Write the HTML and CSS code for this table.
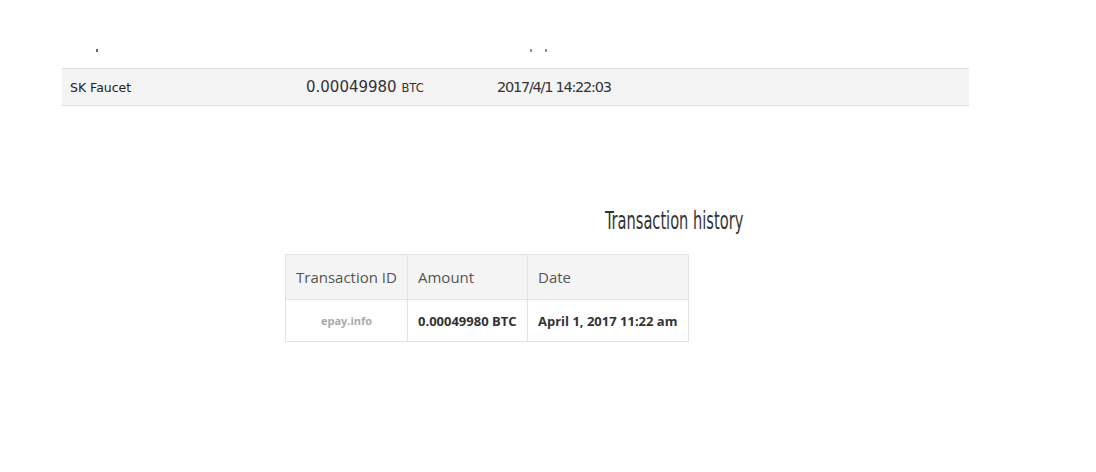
FILE: index.html
```html
<!DOCTYPE html>
<html lang="en">
<head>
    <meta charset="UTF-8">
    <title>Transaction history</title>
    <link rel="stylesheet" href="styles.css">
</head>
<body>
    <!-- previous row is scrolled out of view, only a few descender tips remain -->
    <div class="ghost">
        <span class="tip tip-y"></span>
        <span class="tip tip-slash1"></span>
        <span class="tip tip-slash2"></span>
    </div>
    <table class="payouts">
        <tr>
            <td class="site">SK Faucet</td>
            <td class="amount">0.00049980 <small>BTC</small></td>
            <td class="date">2017/4/1 14:22:03</td>
        </tr>
    </table>

    <section class="history">
        <h2>Transaction history</h2>
        <table class="tx-table">
            <thead>
                <tr>
                    <th class="col-id">Transaction ID</th>
                    <th class="col-amount">Amount</th>
                    <th class="col-date">Date</th>
                </tr>
            </thead>
            <tbody>
                <tr>
                    <td class="tx-id">epay.info</td>
                    <td>0.00049980 BTC</td>
                    <td>April 1, 2017 11:22 am</td>
                </tr>
            </tbody>
        </table>
    </section>
</body>
</html>
```

FILE: styles.css
```css
body {
    margin: 0;
    padding: 0;
    background: #fff;
    font-family: 'DejaVu Sans', sans-serif;
    color: #333;
}
.ghost {
    height: 53px;
    display: flex;
    align-items: flex-end;
}
.tip {
    display: block;
    width: 2px;
    height: 3px;
    margin-bottom: 1px;
    background: #8a6a9a;
    opacity: 0.8;
}
.tip-y {
    margin-left: 96px;
    background: #444;
}
.tip-slash1 {
    margin-left: 432px;
}
.tip-slash2 {
    margin-left: 13px;
}
.payouts {
    margin-top: 15px;
    margin-left: 62px;
    width: 907px;
    table-layout: fixed;
    border-collapse: collapse;
    background: #f4f4f4;
    border-top: 1px solid #dedede;
    border-bottom: 1px solid #dedede;
}
.payouts td {
    height: 36px;
    padding: 0 8px;
    white-space: nowrap;
    color: #222;
}
.payouts .site {
    width: 220px;
    font-size: 12.5px;
}
.payouts .amount {
    width: 175px;
    font-size: 15px;
    color: #333;
}
.payouts .amount small {
    font-size: 11.5px;
}
.payouts .date {
    font-size: 14.5px;
    letter-spacing: -1.25px;
    color: #333;
}
.history {
    margin-top: 100px;
}
.history h2 {
    margin: 0 0 18px 605px;
    font-family: 'Liberation Sans Narrow', 'DejaVu Sans Condensed', sans-serif;
    font-weight: normal;
    font-size: 25px;
    line-height: 30px;
    color: #333;
    transform: scaleX(0.65);
    transform-origin: left;
}
.tx-table {
    margin-left: 285px;
    border-collapse: collapse;
    table-layout: fixed;
    font-family: 'Open Sans', sans-serif;
}
.tx-table th,
.tx-table td {
    border: 1px solid #e3e3e3;
    padding: 0 10px;
    text-align: left;
    white-space: nowrap;
}
.tx-table th {
    height: 44px;
    background: #f4f4f4;
    font-weight: normal;
    font-size: 15px;
    color: #555;
}
.tx-table td {
    height: 41px;
    font-weight: bold;
    font-size: 13px;
    color: #333;
}
.tx-table .col-id {
    width: 101px;
}
.tx-table .col-amount {
    width: 99px;
}
.tx-table .col-date {
    width: 140px;
}
.tx-table .tx-id {
    text-align: center;
    font-size: 11px;
    color: #aaa;
}
```
